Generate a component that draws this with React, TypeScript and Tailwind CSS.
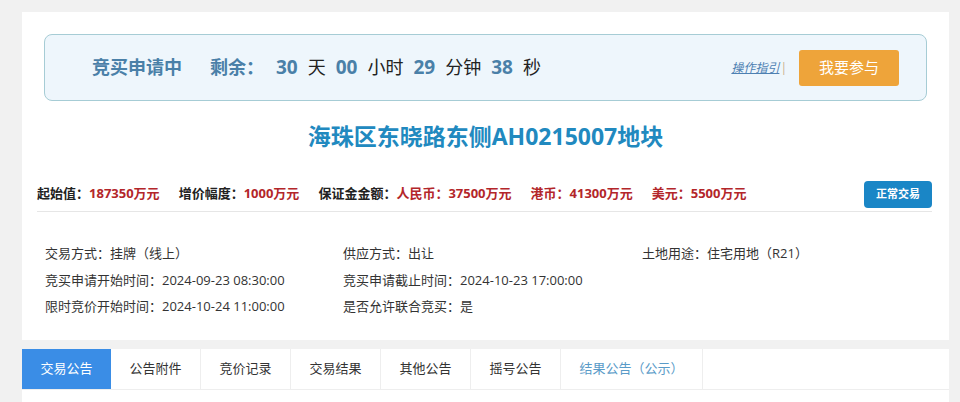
import React from "react";

const font = { fontFamily: '"Open Sans", "Noto Sans CJK SC", sans-serif' };

function Num({ children }: { children: React.ReactNode }) {
  return <span className="font-bold text-[#4a80a8] text-[19px]">{children}</span>;
}

export default function App() {
  const tabs = ["交易公告", "公告附件", "竞价记录", "交易结果", "其他公告", "摇号公告", "结果公告（公示）"];
  return (
    <div className="w-[960px] h-[402px] bg-[#f1f1f1] overflow-hidden" style={font}>
      <div className="ml-[22px] mr-[11px] mt-[12px] h-[328px] bg-white pt-[22px]">
        {/* countdown */}
        <div className="mx-[22px] h-[67px] rounded-[8px] border border-[#a6ccd5] bg-[#eef6fc] flex items-center pl-[47px] pr-[27px]">
          <span className="text-[18px] font-bold text-[#4a80a8]">竞买申请中</span>
          <span className="ml-[28px] text-[18px] font-bold text-[#4a80a8]">剩余：</span>
          <div className="ml-[12px] flex items-center gap-[10px] text-[18px] text-[#222]">
            <Num>30</Num>
            <span>天</span>
            <Num>00</Num>
            <span>小时</span>
            <Num>29</Num>
            <span>分钟</span>
            <Num>38</Num>
            <span>秒</span>
          </div>
          <div className="flex-1" />
          <span className="text-[12px] italic underline text-[#4d80b2]">操作指引</span>
          <span className="text-[12px] text-[#c9b08a] ml-[1px]">|</span>
          <button className="ml-[12px] w-[100px] h-[36px] rounded-[3px] bg-[#eea43a] text-white text-[15px]">
            我要参与
          </button>
        </div>
        {/* title */}
        <div className="mt-[19px] h-[32px] flex items-center justify-center text-[23px] font-bold text-[#2189bf]">
          海珠区东晓路东侧AH0215007地块
        </div>
        {/* price row */}
        <div className="mt-[28px] mx-[15px] mr-[17px] flex items-center h-[28px] text-[13px] font-bold">
          <div className="flex items-center gap-[19px]">
            <span className="text-[#222]">
              起始值：<span className="text-[#b3262a]">187350万元</span>
            </span>
            <span className="text-[#222]">
              增价幅度：<span className="text-[#b3262a]">1000万元</span>
            </span>
            <span className="text-[#222]">
              保证金金额：<span className="text-[#b3262a]">人民币：37500万元</span>
            </span>
            <span className="text-[#b3262a]">港币：41300万元</span>
            <span className="text-[#b3262a]">美元：5500万元</span>
          </div>
          <div className="flex-1" />
          <button className="w-[68px] h-[27px] rounded-[4px] bg-[#1a86c6] text-white text-[11px] font-bold">
            正常交易
          </button>
        </div>
        <div className="mx-[15px] mr-[17px] mt-[3px] h-px bg-[#e6e6e6]" />
        {/* info grid */}
        <div className="mt-[28px] ml-[23px] grid grid-cols-[298px_299px_1fr] text-[13px] text-[#333] leading-[26.5px]">
          <span>交易方式：挂牌（线上）</span>
          <span>供应方式：出让</span>
          <span>土地用途：住宅用地（R21）</span>
          <span>竞买申请开始时间：2024-09-23 08:30:00</span>
          <span>竞买申请截止时间：2024-10-23 17:00:00</span>
          <span></span>
          <span>限时竞价开始时间：2024-10-24 11:00:00</span>
          <span>是否允许联合竞买：是</span>
          <span></span>
        </div>
      </div>
      {/* tabs panel */}
      <div className="ml-[22px] mr-[11px] mt-[9px] h-[60px] bg-white">
        <div className="flex h-[41px] border-b border-[#eeeeee]">
          {tabs.map((t, i) => (
            <div
              key={t}
              className={
                i === 0
                  ? "w-[89px] flex items-center justify-center bg-[#3a8de6] text-white text-[13px]"
                  : i === 6
                  ? "w-[142px] flex items-center justify-center border-r border-[#eeeeee] text-[#5a9bc8] text-[13px]"
                  : "w-[90px] flex items-center justify-center border-r border-[#eeeeee] text-[#333] text-[13px]"
              }
            >
              {t}
            </div>
          ))}
        </div>
      </div>
    </div>
  );
}
